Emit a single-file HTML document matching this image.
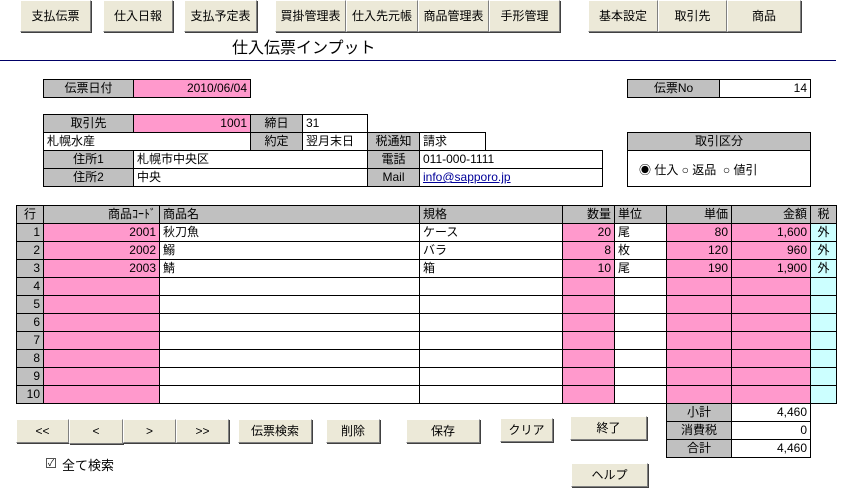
<!DOCTYPE html>
<html><head><meta charset="utf-8"><style>
body{margin:0;width:858px;height:496px;background:#fff;position:relative;overflow:hidden;font-family:"Liberation Sans","Noto Sans CJK JP",sans-serif;font-size:12px;color:#000}
.a{position:absolute;box-sizing:border-box}
.b{position:absolute;box-sizing:border-box;background:#ece9d8;border:1px solid;border-color:#fff #808080 #808080 #fff;box-shadow:1px 1px 0 #404040;text-align:center;font-size:12px}
.c{position:absolute;box-sizing:border-box;border:1px solid #000;height:19px;line-height:17px;padding:0 3px;white-space:nowrap;overflow:hidden}
.g{background:#c0c0c0;text-align:center}
.p{background:#ff99cc;text-align:right}
.w{background:#fff}
.r{text-align:right}
.cy{background:#ccffff;text-align:center}
</style></head><body>
<div class="b" style="left:20px;top:0;width:71px;height:32px;line-height:30px">支払伝票</div>
<div class="b" style="left:103px;top:0;width:70px;height:32px;line-height:30px">仕入日報</div>
<div class="b" style="left:184px;top:0;width:73px;height:32px;line-height:30px">支払予定表</div>
<div class="b" style="left:275px;top:0;width:71px;height:32px;line-height:30px">買掛管理表</div>
<div class="b" style="left:346px;top:0;width:72px;height:32px;line-height:30px">仕入先元帳</div>
<div class="b" style="left:418px;top:0;width:71px;height:32px;line-height:30px">商品管理表</div>
<div class="b" style="left:489px;top:0;width:71px;height:32px;line-height:30px">手形管理</div>
<div class="b" style="left:588px;top:0;width:70px;height:32px;line-height:30px">基本設定</div>
<div class="b" style="left:658px;top:0;width:69px;height:32px;line-height:30px">取引先</div>
<div class="b" style="left:727px;top:0;width:74px;height:32px;line-height:30px">商品</div>
<div class="a" style="left:232px;top:34px;font-size:16px">仕入伝票インプット</div>
<div class="a" style="left:0;top:60px;width:836px;height:1px;background:#000066"></div>

<div class="c g" style="left:43px;top:79px;width:91px">伝票日付</div>
<div class="c p" style="left:133px;top:79px;width:118px">2010/06/04</div>
<div class="c g" style="left:627px;top:79px;width:93px">伝票No</div>
<div class="c w r" style="left:719px;top:79px;width:92px">14</div>

<div class="c g" style="left:43px;top:114px;width:91px">取引先</div>
<div class="c p" style="left:133px;top:114px;width:118px">1001</div>
<div class="c g" style="left:250px;top:114px;width:53px">締日</div>
<div class="c w" style="left:302px;top:114px;width:66px">31</div>
<div class="c w" style="left:43px;top:132px;width:208px">札幌水産</div>
<div class="c g" style="left:250px;top:132px;width:53px">約定</div>
<div class="c w" style="left:302px;top:132px;width:66px">翌月末日</div>
<div class="c g" style="left:367px;top:132px;width:53px">税通知</div>
<div class="c w" style="left:419px;top:132px;width:67px">請求</div>
<div class="c g" style="left:43px;top:150px;width:91px">住所1</div>
<div class="c w" style="left:133px;top:150px;width:235px">札幌市中央区</div>
<div class="c g" style="left:367px;top:150px;width:53px">電話</div>
<div class="c w" style="left:419px;top:150px;width:184px">011-000-1111</div>
<div class="c g" style="left:43px;top:168px;width:91px">住所2</div>
<div class="c w" style="left:133px;top:168px;width:235px">中央</div>
<div class="c g" style="left:367px;top:168px;width:53px">Mail</div>
<div class="c w" style="left:419px;top:168px;width:184px;color:#000099;text-decoration:underline">info@sapporo.jp</div>

<div class="c g" style="left:627px;top:132px;width:184px">取引区分</div>
<div class="a" style="left:627px;top:150px;width:184px;height:37px;border:1px solid #000;border-top:none;padding:11px 0 0 11px;font-size:12px;color:#000">◉ 仕入 ○ 返品 &nbsp;○ 値引</div>

<div id="grid"></div>
<script>
var cols=[[16,28],[43,117],[159,261],[419,144],[562,53],[614,53],[666,66],[731,80],[810,27]];
var hdr=["行","商品ｺｰﾄﾞ","商品名","規格","数量","単位","単価","金額","税"];
var hal=["c","r","l","l","r","l","r","r","c"];
var data=[["2001","秋刀魚","ケース","20","尾","80","1,600","外"],["2002","鰯","バラ","8","枚","120","960","外"],["2003","鯖","箱","10","尾","190","1,900","外"]];
var h="";
for(var i=0;i<9;i++){h+='<div class="c g" style="left:'+cols[i][0]+'px;top:205px;width:'+cols[i][1]+'px;text-align:'+(hal[i]=="r"?"right":hal[i]=="c"?"center":"left")+'">'+hdr[i]+'</div>';}
var bg=["g","p","w","w","p","w","p","p","cy"];
for(var r=0;r<10;r++){var y=223+r*18;var d=data[r]||["","","","","","","",""];
for(var i=0;i<9;i++){var t=i==0?(r+1):d[i-1];var al=hal[i]=="r"?"right":hal[i]=="c"?"center":"left";if(i==0)al="right";
h+='<div class="c '+bg[i]+'" style="left:'+cols[i][0]+'px;top:'+y+'px;width:'+cols[i][1]+'px;text-align:'+al+'">'+t+'</div>';}}
document.getElementById("grid").innerHTML=h;
</script>

<div class="c g" style="left:666px;top:403px;width:66px">小計</div>
<div class="c w r" style="left:731px;top:403px;width:80px">4,460</div>
<div class="c g" style="left:666px;top:421px;width:66px">消費税</div>
<div class="c w r" style="left:731px;top:421px;width:80px">0</div>
<div class="c g" style="left:666px;top:439px;width:66px">合計</div>
<div class="c w r" style="left:731px;top:439px;width:80px">4,460</div>

<div class="b" style="left:16px;top:419px;width:53px;height:24px;line-height:22px">&lt;&lt;</div>
<div class="b" style="left:69px;top:419px;width:54px;height:25px;line-height:22px">&lt;</div>
<div class="b" style="left:123px;top:419px;width:53px;height:24px;line-height:22px">&gt;</div>
<div class="b" style="left:176px;top:419px;width:53px;height:24px;line-height:22px">&gt;&gt;</div>
<div class="b" style="left:238px;top:419px;width:74px;height:24px;line-height:22px">伝票検索</div>
<div class="b" style="left:326px;top:419px;width:54px;height:24px;line-height:22px">削除</div>
<div class="b" style="left:406px;top:419px;width:74px;height:24px;line-height:22px">保存</div>
<div class="b" style="left:500px;top:418px;width:53px;height:24px;line-height:22px">クリア</div>
<div class="b" style="left:570px;top:416px;width:77px;height:24px;line-height:22px">終了</div>
<div class="b" style="left:571px;top:463px;width:77px;height:24px;line-height:22px">ヘルプ</div>

<div class="a" style="left:46px;top:458px;width:10px;height:10px;border:1px solid #555;background:#fff;font-size:9px;line-height:8px;text-align:center">✓</div>
<div class="a" style="left:62px;top:455px;font-size:13px">全て検索</div>
</body></html>
